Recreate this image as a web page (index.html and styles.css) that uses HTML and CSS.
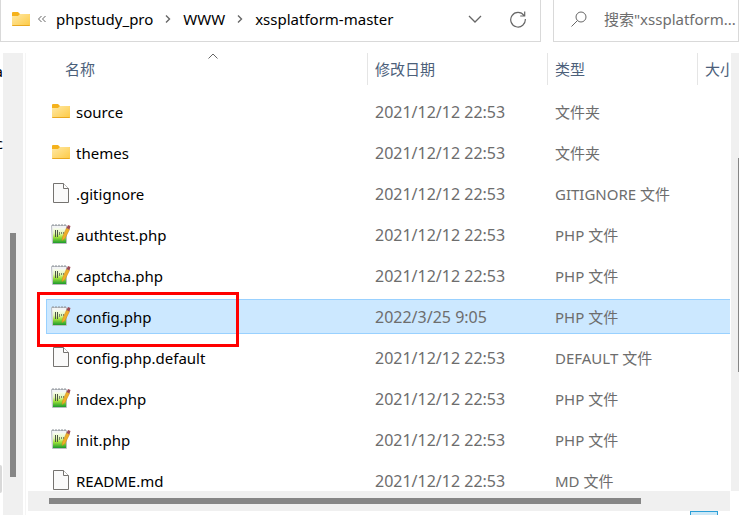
FILE: index.html
```
<!DOCTYPE html>
<html lang="zh-CN">
<head>
  <meta charset="UTF-8">
  <title>xssplatform-master</title>
  <link rel="stylesheet" href="styles.css">
</head>
<body>
  <!-- shared icons -->
  <svg class="sprite" width="0" height="0">
    <defs>
      <linearGradient id="yellow" x1="0" y1="0" x2="1" y2="1">
        <stop offset="0" stop-color="#ffe9a6"/>
        <stop offset="1" stop-color="#fdca45"/>
      </linearGradient>
      <linearGradient id="green" x1="0" y1="0" x2="0" y2="1">
        <stop offset="0" stop-color="#f8fcf0"/>
        <stop offset="0.35" stop-color="#e2f6b4"/>
        <stop offset="0.6" stop-color="#a4e43c"/>
        <stop offset="1" stop-color="#1c9a2c"/>
      </linearGradient>
    </defs>
    <symbol id="folder" viewBox="0 0 20 20">
      <path d="M1 4q0-1 1-1h5l2 2h9q1 0 1 1v4H1z" fill="#f5b21c"/>
      <path d="M1 7h6l2-2h9q1 0 1 1v10q0 1-1 1H2q-1 0-1-1z" fill="url(#yellow)"/>
      <path d="M1 16h18q0 1-1 1H2q-1 0-1-1z" fill="#e9a820"/>
    </symbol>
    <symbol id="file" viewBox="0 0 20 20">
      <path d="M2.500.500h10l5 5v14h-15z" fill="#fafafa" stroke="#757370"/>
      <path d="M12.500.500v5h5" fill="#fff" stroke="#757370"/>
    </symbol>
    <symbol id="php" viewBox="0 0 20 20">
      <path d="M.500 1.500h15v18H1.500z" fill="#f3f4f5" stroke="#b9bdc2"/>
      <path d="M1 1h15" stroke="#8d9298" stroke-dasharray="2 1"/>
      <path d="M2 4h13v15H2z" fill="url(#green)"/>
      <path d="M4.500 13V6M6.500 13V6" stroke="#4a5544"/>
      <path d="M8.500 8v3M10.500 8v2M12.500 8v2" stroke="#7c8a6c"/>
      <path d="M15.500 4l3 1.500-4.500 9-3 2 .5-3.500z" fill="#f0ad28" stroke="#c58a20" stroke-width=".5"/>
      <path d="M15.500 4l1.500-3 2.500 1-1 3.500z" fill="#9c4a55"/>
    </symbol>
    <symbol id="next" viewBox="0 0 6 10">
      <path d="M1 1.500l3.500 3.500L1 8.500" fill="none" stroke="#666" stroke-width="1.400"/>
    </symbol>
  </svg>

  <header class="topbar">
    <nav class="address">
      <svg class="icon"><use href="#folder"/></svg>
      <svg class="back" viewBox="0 0 10 8"><path d="M4.500 1l-3 3 3 3M8.500 1l-3 3 3 3" fill="none" stroke="#666"/></svg>
      <a href="#">phpstudy_pro</a>
      <svg class="next"><use href="#next"/></svg>
      <a href="#">WWW</a>
      <svg class="next"><use href="#next"/></svg>
      <a href="#">xssplatform-master</a>
      <button class="history" aria-label="历史记录">
        <svg width="14" height="8" viewBox="0 0 14 8"><path d="M1 1l6 6 6-6" fill="none" stroke="#666" stroke-width="1.300"/></svg>
      </button>
      <button aria-label="刷新">
        <svg width="18" height="18" viewBox="0 0 18 18"><path d="M15 5.500A7.300 7.300 0 1 0 16.300 9M15.700 1.500v4.500h-4.500" fill="none" stroke="#666" stroke-width="1.200"/></svg>
      </button>
    </nav>
    <form class="search">
      <svg width="16" height="16" viewBox="0 0 16 16"><circle cx="10" cy="6" r="5" fill="none" stroke="#666"/><path d="M6.500 9.500L.500 15.500" stroke="#666"/></svg>
      <input type="text" aria-label="搜索" placeholder="搜索&quot;xssplatform...">
    </form>
  </header>

  <main class="main">
    <aside class="tree">
      <a href="#">data</a>
      <a href="#">doc</a>
      <div class="tree-active"></div>
    </aside>
    <div class="scroll scroll-tree"><div class="thumb"></div></div>

    <section class="pane">
      <div class="list">
        <table>
          <colgroup>
            <col class="col-name">
            <col class="col-date">
            <col class="col-type">
            <col>
          </colgroup>
          <thead>
            <tr>
              <th>
                <div class="head head-name">名称
                  <svg class="sort" width="10" height="6" viewBox="0 0 10 6"><path d="M.500 5.500L5 1l4.500 4.500" fill="none" stroke="#666"/></svg>
                </div>
              </th>
              <th><div class="head">修改日期</div></th>
              <th><div class="head">类型</div></th>
              <th><div class="head">大小</div></th>
            </tr>
          </thead>
          <tbody>
            <tr>
              <td><a class="name" href="#"><svg class="icon"><use href="#folder"/></svg>source</a></td>
              <td class="date">2021/12/12 22:53</td><td>文件夹</td><td></td>
            </tr>
            <tr>
              <td><a class="name" href="#"><svg class="icon"><use href="#folder"/></svg>themes</a></td>
              <td class="date">2021/12/12 22:53</td><td>文件夹</td><td></td>
            </tr>
            <tr>
              <td><a class="name" href="#"><svg class="icon"><use href="#file"/></svg>.gitignore</a></td>
              <td class="date">2021/12/12 22:53</td><td>GITIGNORE 文件</td><td></td>
            </tr>
            <tr>
              <td><a class="name" href="#"><svg class="icon"><use href="#php"/></svg>authtest.php</a></td>
              <td class="date">2021/12/12 22:53</td><td>PHP 文件</td><td></td>
            </tr>
            <tr>
              <td><a class="name" href="#"><svg class="icon"><use href="#php"/></svg>captcha.php</a></td>
              <td class="date">2021/12/12 22:53</td><td>PHP 文件</td><td></td>
            </tr>
            <tr class="selected">
              <td><a class="name" href="#"><svg class="icon"><use href="#php"/></svg>config.php</a><div class="mark"></div></td>
              <td class="date">2022/3/25 9:05</td><td>PHP 文件</td><td></td>
            </tr>
            <tr>
              <td><a class="name" href="#"><svg class="icon"><use href="#file"/></svg>config.php.default</a></td>
              <td class="date">2021/12/12 22:53</td><td>DEFAULT 文件</td><td></td>
            </tr>
            <tr>
              <td><a class="name" href="#"><svg class="icon"><use href="#php"/></svg>index.php</a></td>
              <td class="date">2021/12/12 22:53</td><td>PHP 文件</td><td></td>
            </tr>
            <tr>
              <td><a class="name" href="#"><svg class="icon"><use href="#php"/></svg>init.php</a></td>
              <td class="date">2021/12/12 22:53</td><td>PHP 文件</td><td></td>
            </tr>
            <tr>
              <td><a class="name" href="#"><svg class="icon"><use href="#file"/></svg>README.md</a></td>
              <td class="date">2021/12/12 22:53</td><td>MD 文件</td><td></td>
            </tr>
          </tbody>
        </table>
      </div>
      <div class="scroll scroll-list"><div class="thumb"></div></div>
      <div class="scroll scroll-bottom"><div class="thumb"></div></div>
      <footer class="status"><button class="view" aria-label="详细信息"></button></footer>
    </section>
  </main>
</body>
</html>
```

FILE: styles.css
```
* {
  box-sizing: border-box;
}

body {
  margin: 0;
  height: 100vh;
  display: flex;
  flex-direction: column;
  overflow: hidden;
  background: #fff;
  color: #000;
  font: 15px/20px "Noto Sans", "Noto Sans CJK SC", sans-serif;
}

a {
  color: inherit;
  text-decoration: none;
}

button {
  padding: 0;
  border: none;
  background: none;
  display: flex;
}

svg {
  flex: none;
}

.sprite {
  position: absolute;
}

.icon {
  width: 20px;
  height: 20px;
}

/* address bar and search */
.topbar {
  flex: none;
  display: flex;
  gap: 12px;
  height: 42px;
}

.address,
.search {
  display: flex;
  align-items: center;
  border: 1px solid #d9d9d9;
  border-top: none;
  padding-bottom: 3px;
}

.address {
  flex: 1;
  gap: 12px;
  padding-left: 10px;
  padding-right: 13px;
}

.back {
  width: 10px;
  height: 8px;
  margin: 0 -3px 0 -6px;
}

.next {
  width: 6px;
  height: 10px;
}

.history {
  margin-left: auto;
  margin-right: 15px;
}

.search {
  width: 186px;
  padding-left: 17px;
  gap: 17px;
}

.search input {
  flex: 1;
  min-width: 0;
  padding: 0;
  border: none;
  outline: none;
  background: none;
  font: inherit;
}

.search input::placeholder {
  color: #6d6d6d;
}

.main {
  flex: 1;
  min-height: 0;
  margin-top: 11px;
  display: flex;
}

/* scroll bars */
.scroll {
  display: grid;
  background: #f0f0f0;
}

.thumb {
  grid-area: 2 / 2;
  background: #868686;
}

.scroll-tree {
  width: 20px;
  grid-template: 180fr 244fr 38fr / 7px 6px 7px;
}

.scroll-list {
  grid-template: 105fr 214fr 119fr / 7px 1px;
}

.scroll-bottom {
  grid-template: 7px 6px 7px / 21fr 592fr 89fr;
}

/* edge of the folder tree */
.tree {
  width: 3px;
  padding-top: 8px;
  display: flex;
  flex-direction: column;
  align-items: flex-end;
  gap: 52px;
  overflow: hidden;
}

.tree-active {
  width: 20px;
  height: 28px;
  margin-top: auto;
  margin-right: 1px;
  margin-bottom: 22px;
  background: #d9d9d9;
  border-radius: 2px;
}

.pane {
  flex: 1;
  min-width: 0;
  margin-left: 2px;
  padding-left: 2px;
  border-left: 1px solid #f5f5f5;
  display: grid;
  grid-template-columns: 1fr 8px;
  grid-template-rows: 1fr 20px 4px;
  column-gap: 1px;
}

/* file list */
.list {
  min-width: 0;
  min-height: 0;
  padding-left: 18px;
  overflow: hidden;
}

table {
  width: 100%;
  table-layout: fixed;
  border-collapse: separate;
  border-spacing: 0;
}

.col-name {
  width: 321px;
}

.col-date {
  width: 180px;
}

.col-type {
  width: 150px;
}

th {
  height: 38px;
  padding: 0;
  vertical-align: top;
  text-align: left;
  font-weight: normal;
  color: #4c607a;
  white-space: nowrap;
}

.head {
  height: 32px;
  padding-left: 7px;
  border-left: 1px solid #e5e5e5;
  line-height: 32px;
}

.head-name {
  position: relative;
  margin-left: 11px;
  border-left-color: transparent;
}

.sort {
  position: absolute;
  top: 0;
  left: 50%;
  margin-left: -5px;
}

td {
  position: relative;
  height: 41px;
  padding: 0 0 0 8px;
  border: solid transparent;
  border-width: 3px 0;
  background-clip: padding-box;
  color: #6d6d6d;
  white-space: nowrap;
}

td:first-child {
  padding-left: 5px;
}

.date {
  font-size: 16px;
}

.name {
  display: flex;
  align-items: center;
  gap: 5px;
  color: #000;
}

.name .icon {
  margin-bottom: 2px;
}

.selected td {
  background-color: #cce8ff;
  box-shadow: inset 0 1px #99d1ff, inset 0 -1px #99d1ff;
}

.selected td:first-child {
  box-shadow: inset 0 1px #99d1ff, inset 0 -1px #99d1ff, inset 1px 0 #99d1ff;
}

.mark {
  position: absolute;
  z-index: 1;
  top: -7px;
  left: -9px;
  width: 202px;
  height: 55px;
  border: 3px solid #ff0000;
}

.status {
  grid-column: 1 / -1;
  display: flex;
  justify-content: flex-end;
  overflow: hidden;
  padding-right: 21px;
}

.view {
  width: 28px;
  height: 20px;
  border: 1px solid #2a9fd8;
  background: #cce8f7;
}
```
